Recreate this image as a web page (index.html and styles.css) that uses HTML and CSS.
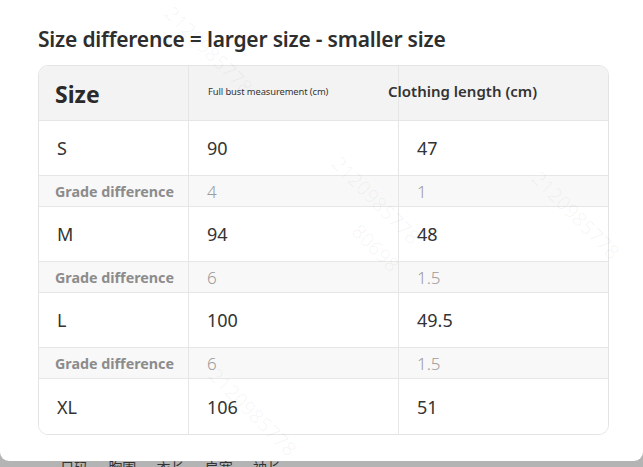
FILE: index.html
```html
<!DOCTYPE html>
<html>
<head>
<meta charset="utf-8">
<link rel="stylesheet" href="styles.css">
</head>
<body>
<div class="panel">
  <h1 class="title">Size difference = larger size - smaller size</h1>
  <div class="table">
    <div class="cell head c1"><span class="size-h">Size</span></div>
    <div class="cell head c2"><span class="bust-h">Full bust measurement (cm)</span></div>
    <div class="cell head c3"><span class="len-h">Clothing length (cm)</span></div>

    <div class="cell main c1">S</div>
    <div class="cell main c2">90</div>
    <div class="cell main c3">47</div>

    <div class="cell grade c1"><span class="grade-l">Grade difference</span></div>
    <div class="cell grade c2">4</div>
    <div class="cell grade c3">1</div>

    <div class="cell main c1">M</div>
    <div class="cell main c2">94</div>
    <div class="cell main c3">48</div>

    <div class="cell grade c1"><span class="grade-l">Grade difference</span></div>
    <div class="cell grade c2">6</div>
    <div class="cell grade c3">1.5</div>

    <div class="cell main c1">L</div>
    <div class="cell main c2">100</div>
    <div class="cell main c3">49.5</div>

    <div class="cell grade c1"><span class="grade-l">Grade difference</span></div>
    <div class="cell grade c2">6</div>
    <div class="cell grade c3">1.5</div>

    <div class="cell main c1 last">XL</div>
    <div class="cell main c2 last">106</div>
    <div class="cell main c3 last">51</div>
  </div>
  <div class="wm wm1">2120985778</div>
  <div class="wm wm2">2120985778</div>
  <div class="wm wm3">2120985778</div>
  <div class="wm wm5">80698</div>
  <div class="wm wm6">2120985778</div>
</div>
<div class="strip"><span class="strip-text">尺码 · 胸围 · 衣长 · 肩宽 · 袖长</span></div>
</body>
</html>
```

FILE: styles.css
```css
html, body {
  margin: 0;
  padding: 0;
}
body {
  width: 643px;
  height: 467px;
  overflow: hidden;
  background: #b4b4b4;
  font-family: "Noto Sans", "Open Sans", "Liberation Sans", sans-serif;
  color: #333;
}
.panel {
  position: relative;
  overflow: hidden;
  background: #fff;
  height: 461px;
  border-radius: 0 0 9px 9px;
  padding: 26px 34px 0 38px;
  box-sizing: border-box;
}
.title {
  margin: 0;
  font-size: 21px;
  font-weight: 600;
  line-height: 27px;
  color: #2e2e2e;
  letter-spacing: -0.2px;
}
.table {
  margin-top: 12px;
  display: grid;
  grid-template-columns: 150px 210px 211px;
  grid-template-rows: 55px 55px 31px 55px 31px 55px 31px 55px;
  border: 1px solid #e4e4e4;
  border-radius: 10px;
  overflow: hidden;
  width: 571px;
  box-sizing: border-box;
}
.cell {
  display: flex;
  align-items: center;
  border-bottom: 1px solid #e6e6e6;
  border-right: 1px solid #e6e6e6;
  box-sizing: border-box;
}
.cell.c3 { border-right: none; }
.cell.last { border-bottom: none; }
.head {
  background: #f3f3f3;
}
.head.c1 { padding-left: 16px; }
.head.c2 { padding-left: 19px; }
.head.c3 { padding-left: 0; }
.size-h {
  font-size: 23px;
  font-weight: 700;
  color: #2a2a2a;
  margin-top: 2px;
}
.bust-h {
  font-size: 9.4px;
  color: #333;
  letter-spacing: -0.1px;
  margin-top: -3px;
}
.len-h {
  font-size: 15px;
  font-weight: 600;
  color: #333;
  margin-left: -11px;
  margin-top: -4px;
}
.main {
  font-size: 18px;
  color: #333;
  background: #fff;
}
.main.c1 { padding-left: 18px; }
.main.c2 { padding-left: 18px; }
.main.c3 { padding-left: 18px; }
.grade {
  background: #f8f8f8;
  font-size: 17px;
  color: #9c9c9c;
  font-weight: 300;
}
.grade.c2, .grade.c3 { padding-left: 18px; }
.grade.c1 { padding-left: 16px; }
.grade-l {
  font-size: 14.3px;
  font-weight: 700;
  color: #8c8c8c;
}
.wm {
  position: absolute;
  font-size: 20px;
  color: rgba(0, 0, 0, 0.035);
  transform: rotate(45deg);
  transform-origin: left top;
  white-space: nowrap;
  pointer-events: none;
  font-family: "Noto Sans", sans-serif;
}
.wm1 { left: 178px; top: 0px; }
.wm2 { left: 345px; top: 150px; }
.wm3 { left: 222px; top: 362px; }
.wm5 { left: 365px; top: 218px; }
.wm6 { left: 545px; top: 165px; }
.strip {
  height: 6px;
  overflow: hidden;
  position: relative;
}
.strip-text {
  position: absolute;
  left: 60px;
  top: -4px;
  font-size: 14px;
  color: #333;
  font-family: "Noto Sans CJK SC", sans-serif;
}
```
